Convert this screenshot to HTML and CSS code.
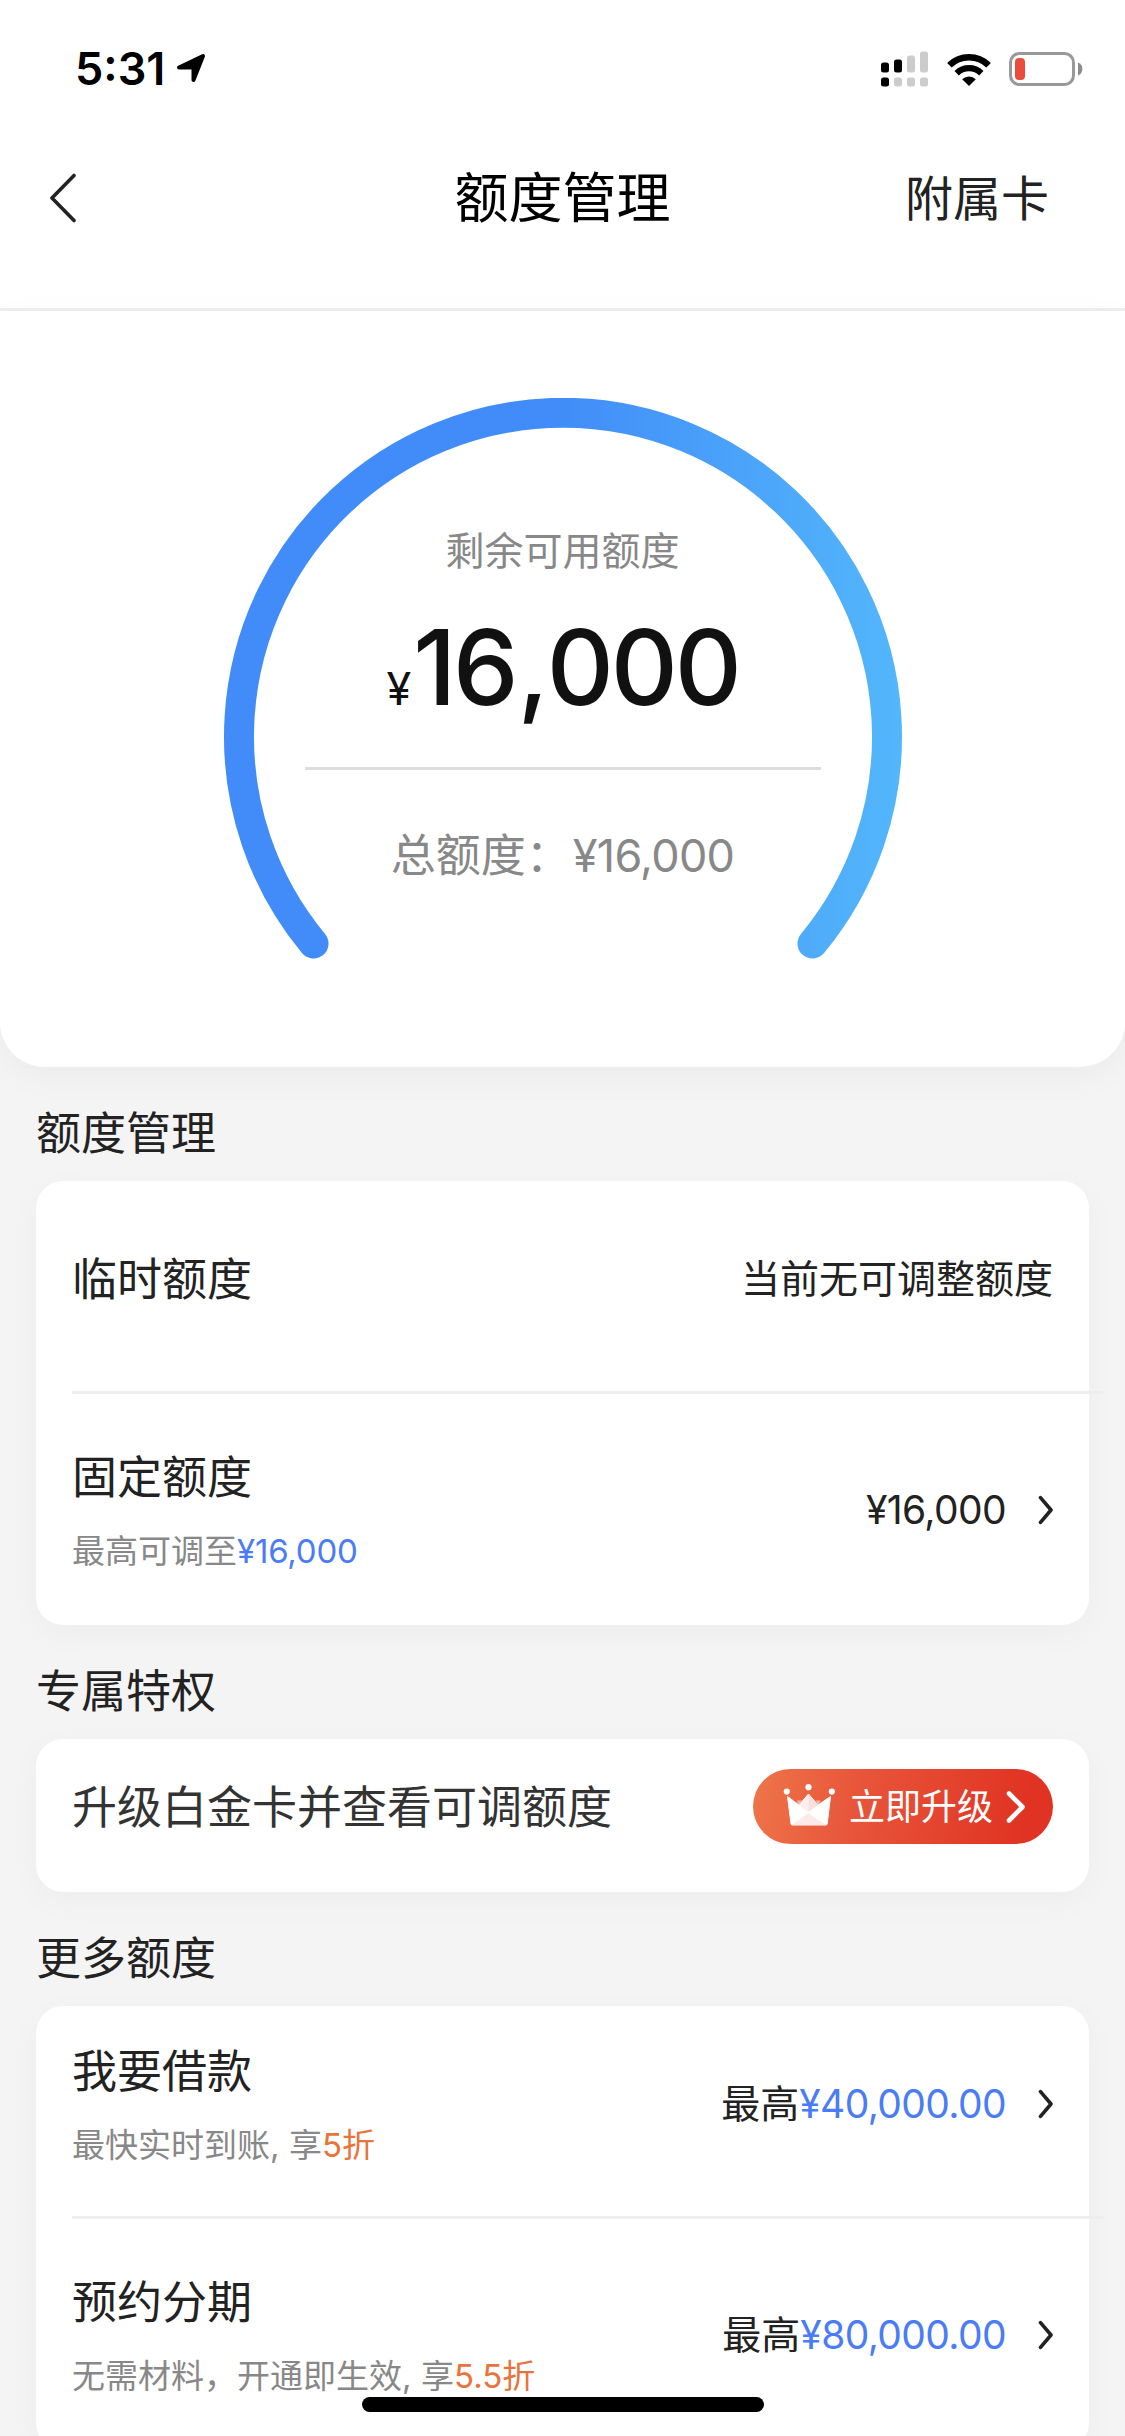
FILE: index.html
```html
<!DOCTYPE html>
<html lang="zh-CN">
<head>
<meta charset="utf-8">
<title>额度管理</title>
<link rel="stylesheet" href="styles.css">
</head>
<body>
<div class="screen">
  <header class="top">
    <div class="status">
      <div class="status-left">
        <span class="clock">5:31</span>
        <svg class="locate" width="30" height="30" viewBox="0 0 30 30"><path d="M27 2.500 17.500 26.500V14H3Z" transform="translate(0 .5)" fill="#000" stroke="#000" stroke-width="4" stroke-linejoin="round"/></svg>
      </div>
      <div class="status-right">
        <svg width="48" height="36" viewBox="0 0 48 36">
          <g fill="#000"><rect x="0" y="11.500" width="8" height="10" rx="2.500"/><rect x="13" y="8.500" width="8" height="13" rx="2.500"/><rect x="0" y="26.500" width="8" height="9" rx="2.500"/></g>
          <g fill="#ccc"><rect x="26" y="4.500" width="8" height="17" rx="2.500"/><rect x="39" y="0.500" width="8" height="21" rx="2.500"/><rect x="13" y="26.500" width="8" height="9" rx="2.500"/><rect x="26" y="26.500" width="8" height="9" rx="2.500"/><rect x="39" y="26.500" width="8" height="9" rx="2.500"/></g>
        </svg>
        <svg width="46" height="36" viewBox="0 0 46 36">
          <path d="M3.400 14.200A28 28 0 0 1 42.600 14.200" fill="none" stroke="#000" stroke-width="6.500"/>
          <path d="M10.700 22.200A17.500 17.500 0 0 1 35.300 22.200" fill="none" stroke="#000" stroke-width="6.200"/>
          <path d="M16.200 28.200A9.800 9.800 0 0 1 29.800 28.200L23 35Z"/>
        </svg>
        <svg width="74" height="36" viewBox="0 0 74 36">
          <rect x="1.500" y="2.500" width="63" height="31" rx="9" fill="none" stroke="#999" stroke-width="3"/>
          <rect x="6" y="7" width="10" height="22" rx="4" fill="#eb4d3d"/>
          <path d="M69 11.500A7 7 0 0 1 69 24.500Z" fill="#8c8c8c"/>
        </svg>
      </div>
    </div>
    <nav class="nav">
      <svg class="back" width="30" height="50" viewBox="0 0 30 50"><path d="M25 2.500 3 25 25 47.500" fill="none" stroke="#222" stroke-width="3.600" stroke-linecap="round" stroke-linejoin="round"/></svg>
      <h1 class="title">额度管理</h1>
      <span class="nav-link">附属卡</span>
    </nav>
  </header>

  <section class="hero">
    <svg class="gauge" width="680" height="562" viewBox="0 0 680 562">
      <defs><linearGradient id="arc" gradientUnits="userSpaceOnUse" x1="330" y1="0" x2="680" y2="0"><stop offset="0" stop-color="#418cf8"/><stop offset="1" stop-color="#53b7fb"/></linearGradient></defs>
      <path d="M90.500 545.500A324 324 0 1 1 589.500 545.500" fill="none" stroke="url(#arc)" stroke-width="30" stroke-linecap="round"/>
    </svg>
    <div class="readout">
      <div class="readout-label">剩余可用额度</div>
      <div class="readout-value"><span class="yen">¥</span><span class="big">16<span class="big-comma">,</span>000</span></div>
      <div class="readout-line"></div>
      <div class="readout-total">总额度：<span class="num45">¥16,000</span></div>
    </div>
  </section>

  <main class="content">
    <h2 class="heading">额度管理</h2>
    <section class="card">
      <div class="row row-temp">
        <div class="name">临时额度</div>
        <div class="value">当前无可调整额度</div>
      </div>
      <div class="divider"></div>
      <div class="row row-fixed">
        <div class="info">
          <div class="name">固定额度</div>
          <div class="note">最高可调至<span class="blue num33">¥16,000</span></div>
        </div>
        <div class="value"><span class="num39">¥16,000</span>
          <svg class="chev" width="18" height="34" viewBox="0 0 18 34"><path d="M5.500 4.700 16 17 5.500 29.300" fill="none" stroke="#222" stroke-width="3.600" stroke-linecap="round" stroke-linejoin="round"/></svg>
        </div>
      </div>
    </section>

    <h2 class="heading">专属特权</h2>
    <section class="card perk">
      <div class="name perk-name">升级白金卡并查看可调额度</div>
      <div class="upgrade">
        <svg class="crown" width="54" height="44" viewBox="0 0 54 44">
          <path d="M5.500 13.500 17 22 26.500 11 36 22 48.500 13.500 45.200 41Q45 42 44 42H10.200Q9.200 42 9 41Z" fill="#fff" stroke="#fff" stroke-width="1" stroke-linejoin="round"/>
          <path d="M26.500 11V29L17 22Z" fill="#fdeeee"/><path d="M26.500 11 36 22 26.500 29Z" fill="#f9dede"/>
          <path d="M26.500 30 44 42H10Z" fill="#fce9e9"/>
          <path d="M15 17.500h4.500L18 20.500l-1.500 1.500zM34 17.500h4.500L37 21l-1.500.500z" fill="#f7b7a8"/>
          <g fill="#fff"><circle cx="4.800" cy="8.600" r="3.100"/><circle cx="26.500" cy="4.200" r="3.100"/><circle cx="49.800" cy="8.600" r="3.100"/></g>
        </svg>
        <span class="upgrade-text">立即升级</span>
        <svg width="22" height="36" viewBox="0 0 22 36"><path d="M4 4.500 17.500 18 4 31.500" fill="none" stroke="#fff" stroke-width="4.600" stroke-linecap="round" stroke-linejoin="round"/></svg>
      </div>
    </section>

    <h2 class="heading">更多额度</h2>
    <section class="card more">
      <div class="row row-loan">
        <div class="info">
          <div class="name">我要借款</div>
          <div class="note">最快实时到账<span class="comma">, </span>享<span class="orange">5折</span></div>
        </div>
        <div class="value">最高<span class="blue num39">¥40,000.00</span>
          <svg class="chev" width="18" height="34" viewBox="0 0 18 34"><path d="M5.500 4.700 16 17 5.500 29.300" fill="none" stroke="#222" stroke-width="3.600" stroke-linecap="round" stroke-linejoin="round"/></svg>
        </div>
      </div>
      <div class="divider"></div>
      <div class="row row-plan">
        <div class="info">
          <div class="name">预约分期</div>
          <div class="note">无需材料，开通即生效<span class="comma">, </span>享<span class="orange">5.5折</span></div>
        </div>
        <div class="value">最高<span class="blue num39">¥80,000.00</span>
          <svg class="chev" width="18" height="34" viewBox="0 0 18 34"><path d="M5.500 4.700 16 17 5.500 29.300" fill="none" stroke="#222" stroke-width="3.600" stroke-linecap="round" stroke-linejoin="round"/></svg>
        </div>
      </div>
    </section>
  </main>
  <div class="home-bar"></div>
</div>
</body>
</html>
```
FILE: styles.css
```css
* { box-sizing: border-box; margin: 0; padding: 0; }
body {
  width: 1125px;
  height: 2436px;
  overflow: hidden;
  background: #f4f4f4;
  font-family: Inter, "Noto Sans CJK SC", sans-serif;
  color: #222;
}
svg { display: block; flex: none; }
.screen { position: relative; height: 2436px; overflow: hidden; }

/* status bar and navigation */
.top { height: 311px; background: #fff; border-bottom: 3px solid #eee; }
.status { display: flex; justify-content: space-between; height: 136px; padding: 0 42px 0 75px; }
.status-left { display: flex; align-items: center; gap: 13px; }
.clock { width: 88px; padding-top: 2px; font-size: 45px; font-weight: 600; line-height: 60px; color: #000; white-space: nowrap; }
.status-right { display: flex; align-items: center; gap: 17px; padding-top: 1px; }
.nav { display: grid; grid-template-columns: 1fr auto 1fr; align-items: center; height: 124px; padding: 0 76px 0 76px; }
.back { margin-left: -27px; }
.title { padding-top: 2px; font-size: 54px; font-weight: 400; line-height: 72px; color: #000; }
.nav-link { justify-self: end; padding-top: 2px; font-size: 48px; line-height: 64px; }

/* available limit gauge */
.hero {
  display: grid;
  justify-items: center;
  align-items: start;
  height: 756px;
  padding-top: 87px;
  background: #fff;
  border-radius: 0 0 45px 45px;
  box-shadow: 0 9px 36px rgba(0, 0, 0, .04);
}
.gauge, .readout { grid-area: 1 / 1; }
.readout { display: flex; flex-direction: column; align-items: center; padding-top: 123px; color: #888; }
.readout-label { font-size: 39px; line-height: 60px; }
.readout-value { display: flex; align-items: baseline; height: 186px; padding-top: 23px; line-height: 126px; color: #111; }
.yen { font-size: 45px; margin-right: 2px; }
.big { font-size: 104px; font-weight: 500; letter-spacing: -3.200px; }
.big-comma { margin: 0 1px 0 2px; }
.readout-line { width: 516px; height: 3px; background: #ddd; }
.readout-total { margin-top: 56px; font-size: 45px; line-height: 60px; white-space: nowrap; }
.num45 { margin-left: 2px; letter-spacing: -.700px; }
.num39 { letter-spacing: -.600px; }
.num33 { letter-spacing: -.200px; }

/* grouped cards */
.content { padding: 0 36px; }
.heading { height: 114px; padding-top: 37px; font-size: 45px; font-weight: 400; line-height: 60px; }
.card { background: #fff; border-radius: 27px; box-shadow: 0 9px 36px rgba(0, 0, 0, .03); }
.row { display: flex; justify-content: space-between; padding: 0 36px; }
.row-temp { height: 210px; padding-top: 69px; }
.row-temp .value { margin-top: -1px; }
.row-fixed { height: 231px; padding-top: 54px; }
.row-loan { height: 210px; padding-top: 36px; }
.row-plan { height: 231px; padding-top: 54px; }
.name { font-size: 45px; line-height: 60px; }
.note { margin-top: 18px; font-size: 33px; line-height: 50px; color: #888; white-space: nowrap; }
.value { display: flex; align-items: center; height: 60px; font-size: 39px; line-height: 60px; white-space: nowrap; }
.row-fixed .value, .row-loan .value, .row-plan .value { margin-top: 32px; }
.chev { margin-left: 29px; }
.divider { height: 3px; margin: 0 -15px 0 36px; background: #eee; }
.blue { color: #4a7cf7; }
.orange { color: #e8743b; }
.comma { display: inline-block; width: 19px; white-space: pre; }
.perk { display: flex; justify-content: space-between; align-items: flex-start; height: 153px; padding: 30px 36px 0; }
.perk-name { margin-top: 9px; color: #333; }
.upgrade {
  display: flex;
  align-items: center;
  width: 300px;
  height: 75px;
  padding-left: 29px;
  border-radius: 38px;
  background: linear-gradient(100deg, #ee7549, #e8553a 35%, #e03323 90%);
  color: #fff;
}
.crown { margin-bottom: 3px; }
.upgrade-text { margin: 0 12px 0 13px; font-size: 36px; line-height: 48px; }

.home-bar {
  position: absolute;
  left: 362px;
  top: 2397px;
  width: 402px;
  height: 15px;
  border-radius: 8px;
  background: #000;
}
```
